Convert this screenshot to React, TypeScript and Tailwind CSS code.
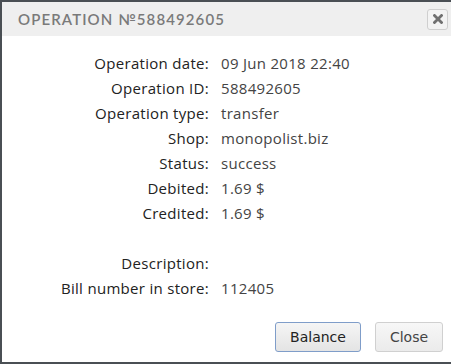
import React from "react";

const rows: [string, string][] = [
  ["Operation date:", "09 Jun 2018 22:40"],
  ["Operation ID:", "588492605"],
  ["Operation type:", "transfer"],
  ["Shop:", "monopolist.biz"],
  ["Status:", "success"],
  ["Debited:", "1.69 $"],
  ["Credited:", "1.69 $"],
  ["", ""],
  ["Description:", ""],
  ["Bill number in store:", "112405"],
];

export default function App() {
  return (
    <div className="w-[451px] h-[364px] bg-white border-t-2 border-l-2 border-b-2 border-[#4a4f54] flex flex-col overflow-hidden">
      <div className="h-[34px] bg-[#efefef] flex items-center justify-between pl-[16px] pr-[3px]">
        <span
          className="text-[15px] tracking-[1.1px] text-[#7a7a7a] font-semibold"
          style={{ fontFamily: "Lato, sans-serif" }}
        >
          OPERATION №588492605
        </span>
        <button className="w-[21px] h-[21px] border border-[#cfcfcf] rounded-[3px] bg-[#f3f3f3] flex items-center justify-center">
          <svg width="10" height="10" viewBox="0 0 10 10">
            <path d="M1.5 1.5 L8.5 8.5 M8.5 1.5 L1.5 8.5" stroke="#707070" strokeWidth="2.8" strokeLinecap="square" />
          </svg>
        </button>
      </div>
      <div
        className="flex flex-col pt-[15px] text-[15px] tracking-[0.3px]"
        style={{ fontFamily: "'Open Sans', sans-serif" }}
      >
        {rows.map(([k, v], i) => (
          <div key={i} className="flex h-[25px] items-center">
            <div className="w-[207px] text-right text-[#222]">{k}</div>
            <div className="pl-[12px] text-[#444]">{v}</div>
          </div>
        ))}
      </div>
      <div
        className="flex-1 flex items-end justify-end gap-[14px] pr-[8px] pb-[10px] text-[14px]"
        style={{ fontFamily: "'DejaVu Sans', sans-serif" }}
      >
        <button className="w-[86px] h-[30px] rounded-[3px] border border-[#7f9dc9] bg-gradient-to-b from-[#f5f5f5] to-[#e4e4e4] text-[#222]">
          Balance
        </button>
        <button className="w-[68px] h-[30px] rounded-[3px] border border-[#d0d0d0] bg-gradient-to-b from-[#f7f7f7] to-[#ebebeb] text-[#444]">
          Close
        </button>
      </div>
    </div>
  );
}
